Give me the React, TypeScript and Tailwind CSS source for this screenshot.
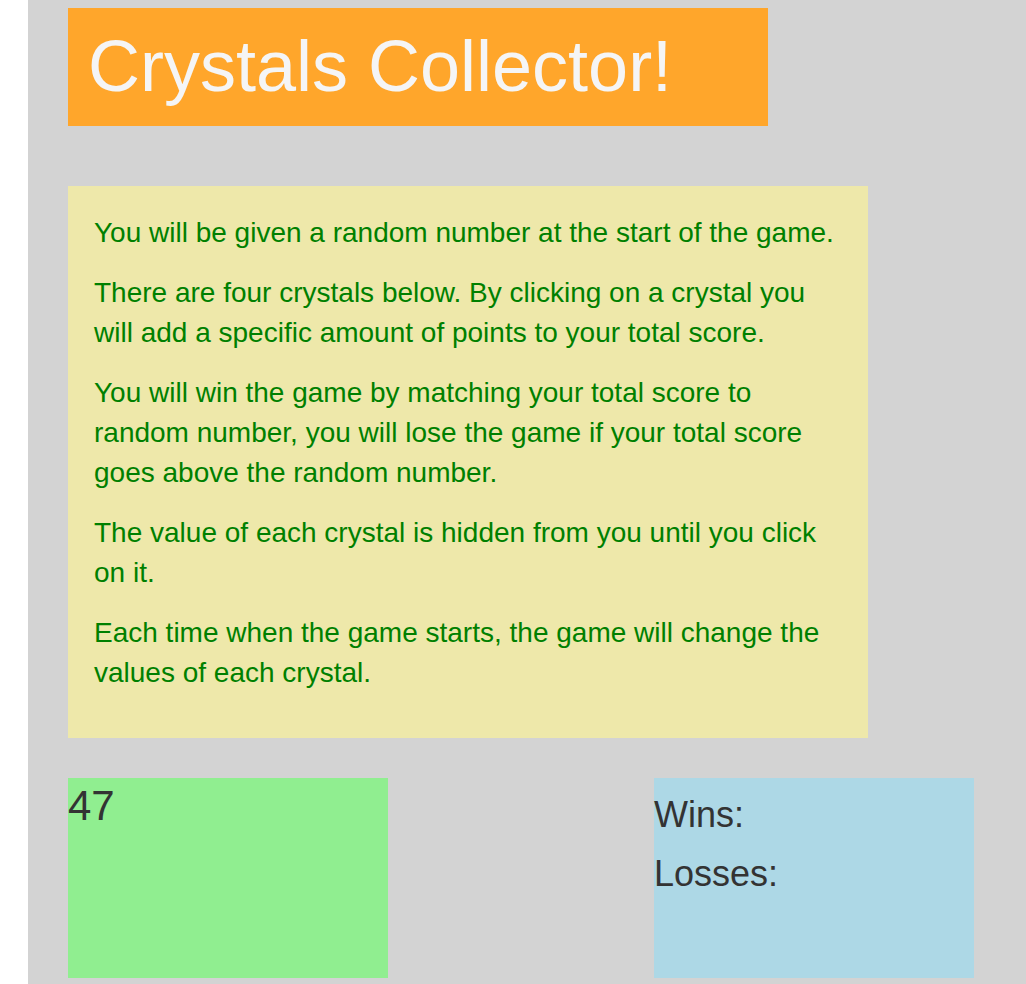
export default function App() {
  const rules = [
    'You will be given a random number at the start of the game.',
    'There are four crystals below. By clicking on a crystal you will add a specific amount of points to your total score.',
    'You will win the game by matching your total score to random number, you will lose the game if your total score goes above the random number.',
    'The value of each crystal is hidden from you until you click on it.',
    'Each time when the game starts, the game will change the values of each crystal.',
  ];

  return (
    <div className="min-h-[984px] bg-white pl-[28px] font-['Liberation_Sans',Arial,sans-serif]">
      <div className="min-h-[984px] bg-[#d3d3d3] pl-[40px] pt-[8px]">
        {/* Title */}
        <div className="h-[118px] w-[700px] bg-[#ffa62b] px-[20px] py-[19px]">
          <h1 className="text-[72px] leading-[79px] text-[#f5f5f5]">Crystals Collector!</h1>
        </div>

        {/* Rules */}
        <div className="mt-[60px] w-[800px] bg-[#eee8aa] px-[26px] pt-[27px] pb-[25px]">
          {rules.map((r) => (
            <p key={r} className="mb-[20px] text-[28px] leading-[40px] text-[#008000]">
              {r}
            </p>
          ))}
        </div>

        {/* Score + record */}
        <div className="mt-[40px] flex w-[906px] justify-between">
          <div className="h-[200px] w-[320px] bg-[#90ee90] pt-[5px]">
            <div className="text-[42px] leading-[46px] text-[#333333]">47</div>
          </div>
          <div className="h-[200px] w-[320px] bg-[#add8e6] pt-[17px]">
            <div className="mb-[19px] text-[36px] leading-[40px] text-[#333333]">Wins:</div>
            <div className="text-[36px] leading-[40px] text-[#333333]">Losses:</div>
          </div>
        </div>
      </div>
    </div>
  );
}
